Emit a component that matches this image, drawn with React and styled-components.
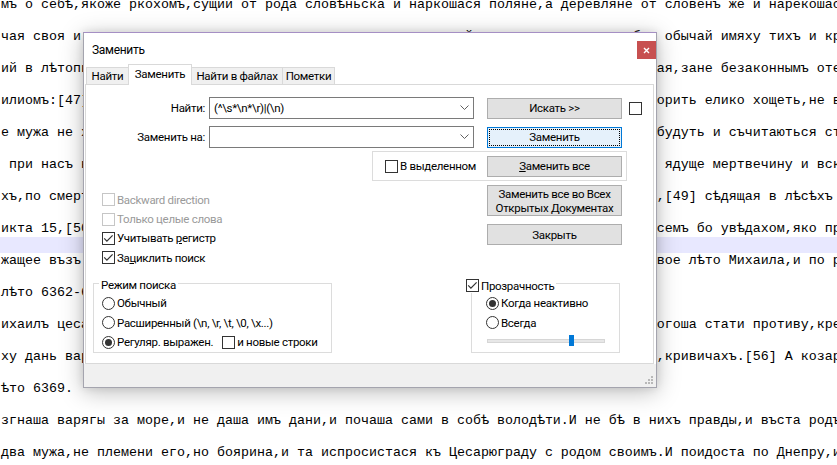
import React from 'react';
import styled, { createGlobalStyle } from 'styled-components';

const GlobalStyle = createGlobalStyle`
  html, body { margin: 0; padding: 0; background: #fff; }
  body { width: 837px; height: 465px; overflow: hidden; }
`;

const Screen = styled.div`
  position: relative;
  width: 837px;
  height: 465px;
  overflow: hidden;
  background: #fff;
`;

/* ---------- editor behind the dialog ---------- */

const Editor = styled.div`
  margin-top: -3px;
  font-family: "Liberation Mono", "Courier New", monospace;
  font-size: 13.33px;
  color: #000;
  white-space: pre;
`;

const Line = styled.div`
  height: 16px;
  line-height: 16px;
  padding-left: 1px;
  background: ${p => (p.$current ? '#e8e8ff' : 'transparent')};
`;

const HIDDEN =
  ' законы отець своихъ и преданья,кождо свой нравъ имяху,поляне бо своихъ отець обычай ';
const row = (left, right) => (left + HIDDEN.repeat(2)).slice(0, 82) + right;

const lines = [
  'мъ о себѣ,якоже ркохомъ,сущии от рода словѣньска и наркошася поляне,а деревляне от словенъ же и нарекошася древляне',
  '',
  row('чая своя и законы', ' обычай имяху тихъ и кротокъ,и стыдѣнье'),
  '',
  row('ий в лѣтописаньи', 'ая,зане безаконнымъ отецъ'),
  '',
  row('илиомъ:[47] творяху', 'орить елико хощеть,не въ срамъ'),
  '',
  row('е мужа не ходяще', 'будуть и съчитаються стыдѣнья'),
  '',
  row(' при насъ нынѣ', ' ядуще мертвечину и вскую нечистоту'),
  '',
  row('хъ,по смерти Кия', ',[49] сѣдящая в лѣсѣхъ на горахъ'),
  '',
  row('икта 15,[50] начен', 'семъ бо увѣдахом,яко при семъ'),
  '',
  row('жащее възъ', 'вое лѣто Михаила,и по ряду'),
  '',
  'лѣто 6362-6367.',
  '',
  row('ихаилъ цесаря', 'огоша стати противу,крепко'),
  '',
  row('ху дань варязи', ',кривичахъ.[56] А козаре'),
  '',
  'ѣто 6369.',
  '',
  'згнаша варягы за море,и не даша имъ дани,и почаша сами в собѣ володѣти.И не бѣ в нихъ правды,и въста родъ на родъ',
  '',
  'два мужа,не племени его,но боярина,и та испросистася къ Цесарюграду с родом своимъ.И поидоста по Днепру,и идуче мимо',
];

/* ---------- dialog window ---------- */

const Dialog = styled.div`
  position: absolute;
  left: 83px;
  top: 32px;
  width: 574px;
  height: 356px;
  box-sizing: border-box;
  display: flex;
  flex-direction: column;
  background: #fff;
  border: 1px solid #a4a4ae;
  border-top-color: #a58fc4;
  box-shadow: 0 4px 22px rgba(0, 0, 0, 0.26), 0 0 8px rgba(0, 0, 0, 0.1);
  font-family: Roboto, "Noto Sans", sans-serif;
  font-size: 11.5px;
  letter-spacing: -0.3px;
  color: #000;
  white-space: nowrap;
`;

const TitleBar = styled.div`
  height: 31px;
  display: flex;
  justify-content: space-between;
  padding-left: 8px;
`;

const Title = styled.span`
  align-self: center;
  margin-top: 3px;
  font-size: 12px;
`;

const CloseBtn = styled.div`
  width: 19px;
  height: 18px;
  margin-top: 8px;
  background: #c75050;
  display: flex;
  align-items: center;
  justify-content: center;
`;

const TabRow = styled.div`
  height: 20px;
  display: flex;
  align-items: flex-end;
  padding-left: 2px;
`;

const Tab = styled.div`
  position: relative;
  box-sizing: border-box;
  width: ${p => p.$w}px;
  height: ${p => (p.$active ? 21 : 17)}px;
  margin-bottom: ${p => (p.$active ? -1 : 0)}px;
  margin-right: -1px;
  z-index: ${p => (p.$active ? 2 : 1)};
  display: flex;
  align-items: center;
  justify-content: center;
  padding-bottom: ${p => (p.$active ? 2 : 0)}px;
  background: ${p => (p.$active ? '#fff' : '#f0f0f0')};
  border: 1px solid #d9d9d9;
  border-bottom: none;
`;

const Panel = styled.div`
  flex: 1;
  margin: 0 2px 0 1px;
  border: 1px solid #d9d9d9;
  display: flex;
  flex-direction: column;
`;

const Footer = styled.div`
  height: 20px;
  background: #f0f0f0;
  display: flex;
  justify-content: flex-end;
  align-items: flex-end;
  padding: 0 3px 3px 0;
`;

/* ---------- controls ---------- */

const FieldRow = styled.div`
  display: flex;
  align-items: center;
  height: 22px;
  margin-top: ${p => p.$top}px;
`;

const FieldLabel = styled.span`
  width: 119px;
  margin-right: 4px;
  text-align: right;
`;

const Combo = styled.div`
  width: 265px;
  height: 22px;
  box-sizing: border-box;
  border: 1px solid #7a7a7a;
  background: #fff;
  display: flex;
  align-items: center;
  padding: 0 4px 2px 4px;
`;

const ComboText = styled.span`
  flex: 1;
  padding-top: 2px;
`;

const Button = styled.div`
  box-sizing: border-box;
  width: 135px;
  height: ${p => p.$h || 21}px;
  margin-left: ${p => p.$ml || 0}px;
  display: flex;
  align-items: center;
  justify-content: center;
  text-align: center;
  line-height: 14px;
  background: ${p => (p.$focus ? '#e5f1fb' : '#e1e1e1')};
  border: 1px solid ${p => (p.$focus ? '#0078d7' : '#adadad')};
  padding: 1px;
`;

const FocusRing = styled.div`
  flex: 1;
  align-self: stretch;
  display: flex;
  align-items: center;
  justify-content: center;
  border: 1px dotted #000;
`;

const Key = styled.span`
  text-decoration: underline;
`;

const Box = styled.span`
  width: 13px;
  height: 13px;
  box-sizing: border-box;
  flex: none;
  border: 1px solid ${p => (p.$disabled ? '#c6c6c6' : '#333')};
  background: #fff;
  display: flex;
  align-items: center;
  justify-content: center;
`;

const RadioRing = styled.span`
  width: 13px;
  height: 13px;
  box-sizing: border-box;
  flex: none;
  border: 1px solid #333;
  border-radius: 50%;
  background: #fff;
  display: flex;
  align-items: center;
  justify-content: center;
`;

const RadioDot = styled.span`
  width: 7px;
  height: 7px;
  border-radius: 50%;
  background: #333;
`;

const Option = styled.div`
  display: flex;
  align-items: center;
  gap: 2px;
  height: ${p => p.$h || 19.4}px;
  color: ${p => (p.$disabled ? '#9a9a9a' : '#000')};
`;

const Check = ({ checked, disabled }) => (
  <Box $disabled={disabled}>
    {checked && (
      <svg width="11" height="11" viewBox="0 0 11 11">
        <polyline points="1.2,5.4 3.9,8.1 9.6,2.3" fill="none" stroke="#333" strokeWidth="1.2" />
      </svg>
    )}
  </Box>
);

const Radio = ({ checked }) => <RadioRing>{checked && <RadioDot />}</RadioRing>;

const Chevron = () => (
  <svg width="9" height="5" viewBox="0 0 9 5">
    <polyline points="0.5,0.5 4.5,4.5 8.5,0.5" fill="none" stroke="#606060" />
  </svg>
);

/* ---------- panel sections ---------- */

const SelectionGroup = styled.div`
  box-sizing: border-box;
  width: 255px;
  height: 30px;
  margin: 3px 0 0 286px;
  border: 1px solid #dcdcdc;
  display: flex;
  align-items: center;
  padding: 0 4px 0 12px;
`;

const Middle = styled.div`
  display: flex;
  margin-top: 4px;
`;

const OptionsColumn = styled.div`
  width: 401px;
  box-sizing: border-box;
  padding: 5px 0 0 16px;
`;

const ButtonColumn = styled.div`
  display: flex;
  flex-direction: column;
  gap: 8px;
`;

const Bottom = styled.div`
  display: flex;
  margin-top: 15px;
`;

const Group = styled.div`
  position: relative;
  box-sizing: border-box;
  width: ${p => p.$w}px;
  height: 70px;
  margin-left: ${p => p.$ml}px;
  border: 1px solid #dcdcdc;
  padding: ${p => p.$pt}px 0 0 ${p => p.$pl}px;
`;

const Caption = styled.div`
  position: absolute;
  top: ${p => p.$top}px;
  left: ${p => p.$left}px;
  display: flex;
  align-items: center;
  gap: 2px;
  height: 14px;
  padding: 0 2px;
  background: #fff;
`;

const Inline = styled.span`
  display: flex;
  align-items: center;
  gap: 2px;
  margin-left: ${p => p.$ml || 0}px;
`;

const Track = styled.div`
  position: relative;
  width: 118px;
  height: 4px;
  box-sizing: border-box;
  margin: 2px 0 0 1px;
  background: #e7e7e7;
  border: 1px solid #d6d6d6;
  top: 4px;
`;

const Thumb = styled.div`
  position: absolute;
  left: ${p => p.$pos}px;
  top: -5px;
  width: 5px;
  height: 11px;
  background: #0078d7;
`;

const Grip = () => (
  <svg width="10" height="10" viewBox="0 0 10 10">
    {[
      [8, 0],
      [5, 3],
      [8, 3],
      [2, 6],
      [5, 6],
      [8, 6],
    ].map(([x, y]) => (
      <rect key={`${x}-${y}`} x={x} y={y + 2} width="2" height="2" fill="#b8b8b8" />
    ))}
  </svg>
);

export default function App() {
  return (
    <Screen>
      <GlobalStyle />
      <Editor>
        {lines.map((text, i) => (
          <Line key={i} $current={i === 15}>
            {text || ' '}
          </Line>
        ))}
      </Editor>

      <Dialog>
        <TitleBar>
          <Title>Заменить</Title>
          <CloseBtn>
            <svg width="7" height="7" viewBox="0 0 7 7">
              <path d="M1 1 L6 6 M6 1 L1 6" stroke="#fff" strokeWidth="1.4" />
            </svg>
          </CloseBtn>
        </TitleBar>

        <TabRow>
          <Tab $w={43}>Найти</Tab>
          <Tab $w={64} $active>
            Заменить
          </Tab>
          <Tab $w={92}>Найти в файлах</Tab>
          <Tab $w={53}>Пометки</Tab>
        </TabRow>

        <Panel>
          <FieldRow $top={12}>
            <FieldLabel>Найти:</FieldLabel>
            <Combo>
              <ComboText>(^\s*\n*\r)|(\n)</ComboText>
              <Chevron />
            </Combo>
            <Button $ml={13}>Искать &gt;&gt;</Button>
            <Inline $ml={7}>
              <Check />
            </Inline>
          </FieldRow>

          <FieldRow $top={7}>
            <FieldLabel>Заменить на:</FieldLabel>
            <Combo>
              <ComboText />
              <Chevron />
            </Combo>
            <Button $ml={13} $focus>
              <FocusRing>Заменить</FocusRing>
            </Button>
          </FieldRow>

          <SelectionGroup>
            <Inline>
              <Check />
              В выделенном
            </Inline>
            <Button style={{ marginLeft: 'auto' }}>
              <span>
                <Key>З</Key>аменить все
              </span>
            </Button>
          </SelectionGroup>

          <Middle>
            <OptionsColumn>
              <Option $disabled>
                <Check disabled />
                Backward direction
              </Option>
              <Option $disabled>
                <Check disabled />
                Только целые слова
              </Option>
              <Option>
                <Check checked />
                <span>
                  Учитывать <Key>р</Key>егистр
                </span>
              </Option>
              <Option>
                <Check checked />
                <span>
                  За<Key>ц</Key>иклить поиск
                </span>
              </Option>
            </OptionsColumn>
            <ButtonColumn>
              <Button $h={31}>
                <span>
                  Заменить все во Всех
                  <br />
                  Открытых <Key>Д</Key>окументах
                </span>
              </Button>
              <Button>Закрыть</Button>
            </ButtonColumn>
          </Middle>

          <Bottom>
            <Group $w={239} $ml={7} $pt={10} $pl={8}>
              <Caption $top={-6} $left={5}>
                Режим поиска
              </Caption>
              <Option $h={19.5}>
                <Radio />
                Обычный
              </Option>
              <Option $h={19.5}>
                <Radio />
                Расширенный (\n, \r, \t, \0, \x...)
              </Option>
              <Option $h={19.5}>
                <Radio checked />
                Регуляр. выражен.
                <Inline $ml={7}>
                  <Check />
                  и новые строки
                </Inline>
              </Option>
            </Group>

            <Group $w={149} $ml={139} $pt={10} $pl={14}>
              <Caption $top={-5} $left={-8}>
                <Check checked />
                Прозрачность
              </Caption>
              <Option $h={19.5}>
                <Radio checked />
                Когда неактивно
              </Option>
              <Option $h={19.5}>
                <Radio />
                Всегда
              </Option>
              <Track>
                <Thumb $pos={81} />
              </Track>
            </Group>
          </Bottom>
        </Panel>

        <Footer>
          <Grip />
        </Footer>
      </Dialog>
    </Screen>
  );
}
